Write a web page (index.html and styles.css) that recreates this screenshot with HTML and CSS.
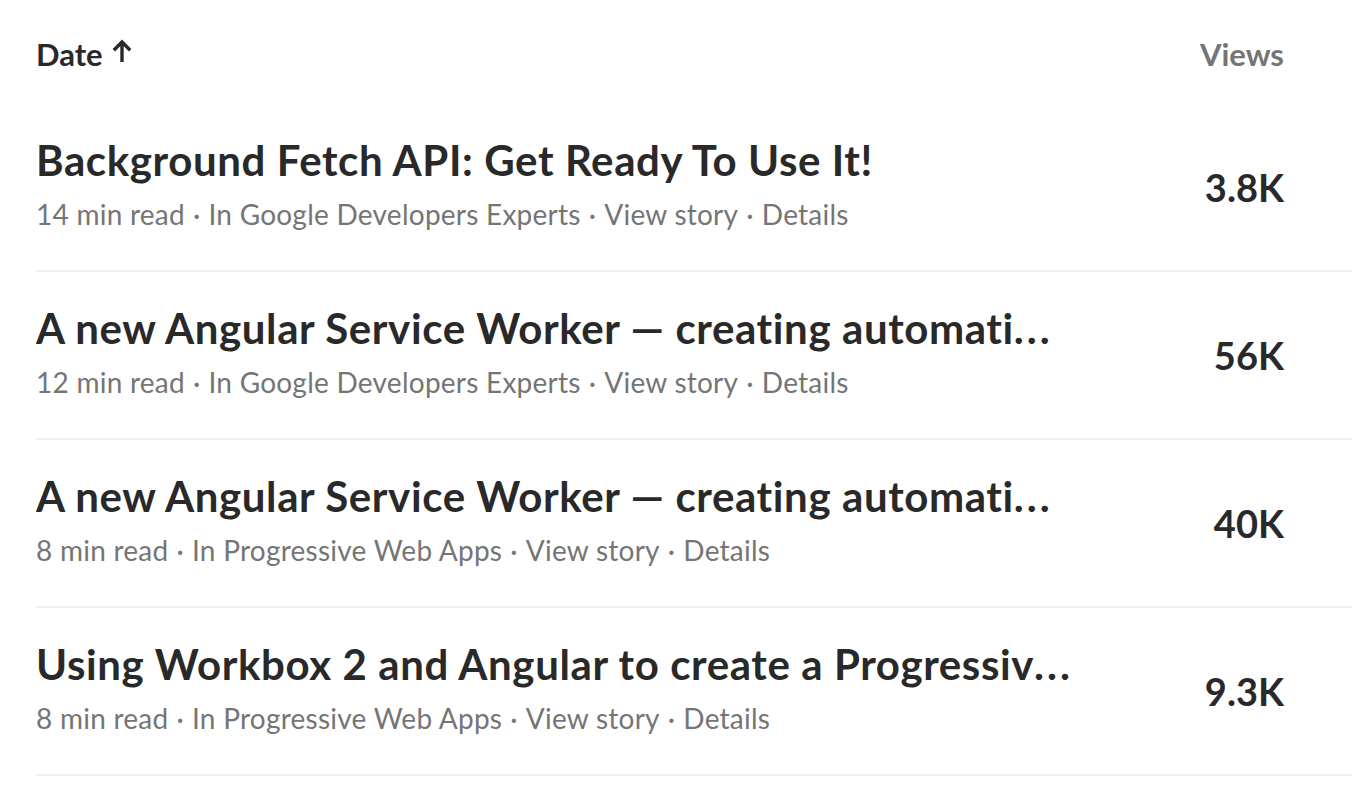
FILE: index.html
```html
<!DOCTYPE html>
<html lang="en">
<head>
<meta charset="utf-8">
<title>Stories stats</title>
<link rel="stylesheet" href="styles.css">
</head>
<body>
<div class="table">
  <div class="head">
    <div class="sort">Date
      <svg class="arrow" width="22" height="24" viewBox="0 0 22 24"><path d="M11 23V3M2.8 11.2L11 3l8.2 8.2" fill="none" stroke="#292929" stroke-width="3.4"/></svg>
    </div>
    <div class="views-h">Views</div>
  </div>

  <div class="row">
    <div class="info">
      <div class="title">Background Fetch API: Get Ready To Use It!</div>
      <div class="meta"><span>14 min read</span><span class="sep">·</span><span>In Google Developers Experts</span><span class="sep">·</span><span>View story</span><span class="sep">·</span><span>Details</span></div>
    </div>
    <div class="num">3.8K</div>
  </div>

  <div class="row">
    <div class="info">
      <div class="title">A new Angular Service Worker — creating automati<span class="dots">..</span>.</div>
      <div class="meta"><span>12 min read</span><span class="sep">·</span><span>In Google Developers Experts</span><span class="sep">·</span><span>View story</span><span class="sep">·</span><span>Details</span></div>
    </div>
    <div class="num">56K</div>
  </div>

  <div class="row">
    <div class="info">
      <div class="title">A new Angular Service Worker — creating automati<span class="dots">..</span>.</div>
      <div class="meta"><span>8 min read</span><span class="sep">·</span><span>In Progressive Web Apps</span><span class="sep">·</span><span>View story</span><span class="sep">·</span><span>Details</span></div>
    </div>
    <div class="num">40K</div>
  </div>

  <div class="row">
    <div class="info">
      <div class="title">Using Workbox 2 and Angular to create a Progressiv<span class="dots">..</span>.</div>
      <div class="meta"><span>8 min read</span><span class="sep">·</span><span>In Progressive Web Apps</span><span class="sep">·</span><span>View story</span><span class="sep">·</span><span>Details</span></div>
    </div>
    <div class="num">9.3K</div>
  </div>
</div>
</body>
</html>
```

FILE: styles.css
```css
html, body {
  margin: 0;
  padding: 0;
  background: #ffffff;
}

body {
  font-family: Lato, "Open Sans", sans-serif;
  color: #292929;
}

.table {
  padding-left: 36px;
}

.head {
  display: flex;
  justify-content: space-between;
  align-items: center;
  height: 104px;
  padding-right: 68px;
  box-sizing: border-box;
}

.sort {
  display: flex;
  align-items: center;
  gap: 8px;
  font-size: 31px;
  font-weight: 700;
  line-height: 36px;
  color: #292929;
  margin-top: 4px;
}

.arrow {
  display: block;
  margin-top: -6px;
}

.views-h {
  font-size: 31px;
  font-weight: 700;
  line-height: 36px;
  color: #757575;
  margin-top: 4px;
}

.row {
  display: flex;
  align-items: center;
  gap: 24px;
  height: 168px;
  box-sizing: border-box;
  border-bottom: 2px solid #f0f0f0;
  padding-right: 68px;
}

.info {
  flex: 0 1 1050px;
  min-width: 0;
  margin-bottom: 6px;
}

.title {
  font-size: 42px;
  font-weight: 700;
  line-height: 48px;
  letter-spacing: 0.6px;
  white-space: nowrap;
  overflow: hidden;
  text-overflow: ellipsis;
  color: #292929;
}

.dots {
  letter-spacing: 3px;
}

.meta {
  display: flex;
  margin-top: 12px;
  font-size: 28px;
  line-height: 36px;
  letter-spacing: 0.25px;
  color: #757575;
  white-space: nowrap;
}

.sep {
  padding: 0 8px;
}

.num {
  margin-left: auto;
  font-size: 38px;
  font-weight: 700;
  line-height: 44px;
  color: #292929;
}
```
